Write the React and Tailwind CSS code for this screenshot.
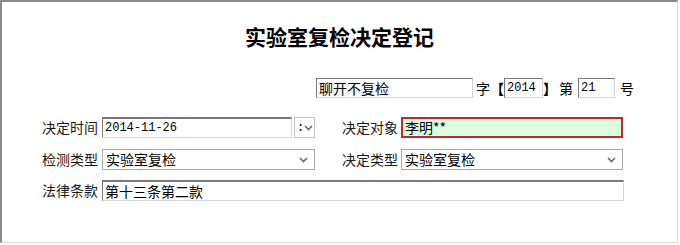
import React from 'react';

const cjk = { fontFamily: '"Noto Sans CJK SC", "Noto Sans", sans-serif' };
const mono = { fontFamily: '"Liberation Mono", "Noto Sans CJK SC", monospace' };

const Chevron = () => (
  <svg width="9" height="6" viewBox="0 0 9 6" className="shrink-0">
    <polyline points="1,1 4.5,4.5 8,1" fill="none" stroke="#6b6b6b" strokeWidth="1.6" />
  </svg>
);

const TextBox = ({ value, className = '', font = cjk, textClass = 'text-[14px]' }) => (
  <div
    className={`h-full flex items-center pl-[2px] bg-white border border-t-[#7a7a7a] border-l-[#7a7a7a] border-b-[#d6d6d6] border-r-[#d6d6d6] overflow-hidden whitespace-nowrap ${textClass} ${className}`}
    style={font}
  >
    {value}
  </div>
);

const SelectBox = ({ value, className = '' }) => (
  <div
    className={`h-full flex items-center justify-between pl-[3px] pr-[6px] bg-white border border-[#a9a9a9] text-[14px] ${className}`}
    style={cjk}
  >
    <span>{value}</span>
    <Chevron />
  </div>
);

const Label = ({ children, className = '' }) => (
  <div className={`text-[14px] text-[#1a1a1a] whitespace-nowrap ${className}`} style={cjk}>
    {children}
  </div>
);

export default function App() {
  return (
    <div className="w-[680px] h-[245px] bg-white">
      <div className="w-[678px] h-[243px] border-t-2 border-l-2 border-t-[#8a8a8a] border-l-[#8a8a8a] border-r border-b border-r-[#dcdcdc] border-b-[#dcdcdc] flex flex-col">
        <div className="pt-[20px] h-[48px] text-center text-[21px] leading-[28px] font-bold text-black" style={cjk}>
          实验室复检决定登记
        </div>

        <div className="mt-[28px] h-[20px] flex items-center pl-[314px] text-[14px]" style={cjk}>
          <TextBox value="聊开不复检" className="w-[157px]" />
          <span className="ml-[3px]">字</span>
          <span className="font-bold">【</span>
          <TextBox value="2014" className="w-[39px]" font={mono} textClass="text-[12px]" />
          <span className="font-bold">】</span>
          <span className="ml-[2px]">第</span>
          <TextBox value="21" className="w-[37px] ml-[5px]" font={mono} textClass="text-[12px]" />
          <span className="ml-[5px]">号</span>
        </div>

        <div className="mt-[19px] h-[21px] flex items-center pl-[40px]">
          <Label className="w-[60px]">决定时间</Label>
          <div className="w-[213px] h-full flex">
            <TextBox value="2014-11-26" className="w-[190px] border-t-2" font={mono} textClass="text-[12px]" />
            <div className="ml-[2px] w-[21px] h-full flex items-center justify-between px-[2px] pr-[3px] bg-white border border-[#c4c4c4] text-[12px]" style={mono}>
              <span className="leading-none">:</span>
              <Chevron />
            </div>
          </div>
          <div className="w-[27px]" />
          <Label className="w-[59px]">决定对象</Label>
          <div
            className="w-[222px] h-full flex items-center pl-[2px] bg-[#ddffdd] border-2 border-[#c0282d] text-[14px]"
            style={cjk}
          >
            李明**
          </div>
        </div>

        <div className="mt-[11px] h-[21px] flex items-center pl-[40px]">
          <Label className="w-[60px]">检测类型</Label>
          <SelectBox value="实验室复检" className="w-[213px]" />
          <div className="w-[27px]" />
          <Label className="w-[59px]">决定类型</Label>
          <SelectBox value="实验室复检" className="w-[222px]" />
        </div>

        <div className="mt-[10px] h-[21px] flex items-center pl-[40px]">
          <Label className="w-[60px]">法律条款</Label>
          <TextBox value="第十三条第二款" className="w-[522px] border-t-2" />
        </div>
      </div>
    </div>
  );
}
